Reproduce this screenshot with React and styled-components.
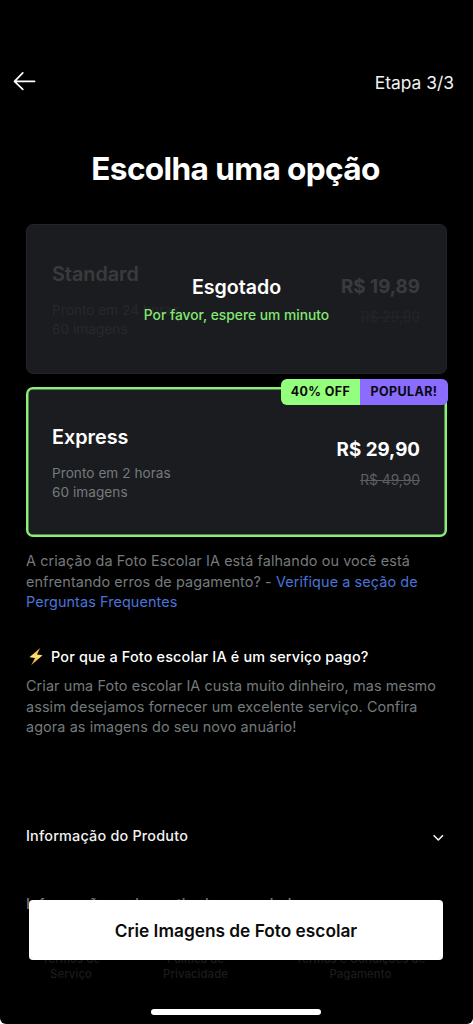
import React from 'react';
import styled, {createGlobalStyle} from 'styled-components';

const GlobalStyle = createGlobalStyle`
  * {
    box-sizing: border-box;
  }

  body {
    margin: 0;
    background: #fff;
    font-family: Inter, "Noto Sans", sans-serif;
    -webkit-font-smoothing: antialiased;
  }

  h1, h2, h3, p {
    margin: 0;
  }
`;

const Screen = styled.div`
  position: relative;
  height: 1024px;
  overflow: hidden;
  background: #000;
  border-radius: 0 0 6px 6px;
  color: #fff;
`;

const Header = styled.header`
  display: flex;
  align-items: center;
  justify-content: space-between;
  height: 165px;
  padding: 0 19px 0 13px;
`;

const BackButton = styled.button`
  display: flex;
  padding: 0;
  margin-top: -3px;
  border: 0;
  background: none;
  color: #fff;
`;

const Step = styled.span`
  font-size: 17.4px;
  color: #f2f2f2;
`;

const Title = styled.h1`
  margin-top: -17px;
  padding-right: 2px;
  text-align: center;
  font-size: 31.6px;
  line-height: 42px;
  font-weight: 700;
  letter-spacing: -0.63px;
`;

const Content = styled.main`
  padding: 0 26px;
`;

const Plans = styled.section`
  display: flex;
  flex-direction: column;
  gap: 13px;
  margin: 34px 0 14px;
`;

const Card = styled.article`
  position: relative;
  display: flex;
  justify-content: space-between;
  height: 150px;
  padding: ${({$active}) => ($active ? '35px 25px 0 24px' : '36px 26px 0 25px')};
  border: ${({$active}) => ($active ? '2px solid #8cf078' : '1px solid #232428')};
  border-radius: 7px;
  background: #1b1c1f;
  box-shadow: ${({$active}) => ($active ? 'inset 0 0 0 0.5px #8cf078' : 'none')};
`;

const PlanInfo = styled.div`
  opacity: ${({$faded}) => ($faded ? 0.13 : 1)};
`;

const PlanName = styled.h2`
  margin-bottom: 14px;
  font-size: 19.8px;
  line-height: 26px;
  font-weight: 600;
`;

const PlanDetail = styled.p`
  font-size: 13.6px;
  line-height: 19.2px;
  letter-spacing: 0.05px;
  color: #747b7e;
`;

const PlanPrice = styled.div`
  padding-top: 13px;
  text-align: right;
  opacity: ${({$faded}) => ($faded ? 0.13 : 1)};
`;

const Price = styled.p`
  font-size: 18.8px;
  line-height: 26px;
  font-weight: 700;
`;

const OldPrice = styled.p`
  margin-top: 7px;
  font-size: 13.8px;
  line-height: 20px;
  color: #5b5e61;
  text-decoration: line-through;
`;

const SoldOut = styled.div`
  position: absolute;
  inset: 2px 0 0;
  display: flex;
  flex-direction: column;
  align-items: center;
  justify-content: center;
  gap: 4px;
`;

const SoldOutTitle = styled.p`
  font-size: 19.6px;
  line-height: 26px;
  font-weight: 600;
`;

const SoldOutText = styled.p`
  font-size: 13.8px;
  line-height: 22px;
  font-weight: 500;
  color: #82e872;
`;

const Badges = styled.div`
  position: absolute;
  top: -10px;
  right: -3px;
  display: flex;
  overflow: hidden;
  height: 26px;
  border-radius: 6px;
`;

const Badge = styled.span`
  width: ${({$width}) => $width};
  background: ${({$color}) => $color};
  color: #08090c;
  font-size: 12.5px;
  line-height: 26px;
  font-weight: 700;
  letter-spacing: 0.4px;
  text-align: center;
  white-space: nowrap;
`;

const Text = styled.p`
  font-size: 14.4px;
  line-height: 20.5px;
  letter-spacing: 0.1px;
  white-space: nowrap;
  color: #747a7c;
`;

const Link = styled.a`
  color: #4c73d9;
`;

const Question = styled.h3`
  display: flex;
  align-items: center;
  gap: 6px;
  margin: 33px 0 8.5px;
  font-size: 14.4px;
  line-height: 22px;
  font-weight: 500;
  letter-spacing: 0.17px;

  svg {
    margin-left: 1px;
  }
`;

const AccordionRow = styled.div`
  display: flex;
  align-items: center;
  justify-content: space-between;
  margin-top: ${({$top}) => $top};
  font-size: 14.4px;
  line-height: 20px;
  font-weight: 500;
  letter-spacing: 0.2px;
  white-space: nowrap;
  color: ${({$muted}) => ($muted ? '#77797b' : '#f2f2f2')};

  svg {
    margin: 5px 3px 0 0;
  }
`;

const BottomBar = styled.div`
  position: absolute;
  left: 0;
  right: 0;
  bottom: 0;
  height: 124px;
  padding: 0 29px;
`;

const CreateButton = styled.button`
  position: relative;
  display: block;
  width: 414px;
  height: 60px;
  padding: 1px 0 0;
  border: 0;
  border-radius: 4px;
  background: #fff;
  color: #0b0b0b;
  font-family: inherit;
  font-size: 17.3px;
  font-weight: 600;
`;

const Footer = styled.footer`
  display: grid;
  grid-template-columns: 84px 165px 165px;
  margin-top: -8px;
  font-size: 11.3px;
  line-height: 14.5px;
  font-weight: 500;
  letter-spacing: 0.1px;
  text-align: center;
  color: #1c1c1c;
`;

const HomeIndicator = styled.div`
  width: 170px;
  height: 6px;
  margin: 28px 0 0 122px;
  border-radius: 3px;
  background: #fff;
`;

const ArrowLeft = () => (
    <svg width="23" height="20" viewBox="0 0 23 20" fill="none" stroke="currentColor" strokeWidth="1.7" strokeLinecap="round" strokeLinejoin="round">
        <path d="M21.6 10.3H1.5M9.8 1.9L1.5 10.3L9.8 18.4"/>
    </svg>
);

const ChevronDown = () => (
    <svg width="11" height="8" viewBox="0 0 11 8" fill="none" stroke="currentColor" strokeWidth="1.6" strokeLinecap="round" strokeLinejoin="round">
        <path d="M1.1 1.7L5.3 6L9.5 1.7"/>
    </svg>
);

const Bolt = () => (
    <svg width="18" height="20" viewBox="0 0 18 20">
        <defs>
            <linearGradient id="bolt" x1="0" y1="0" x2="0" y2="1">
                <stop offset="0" stopColor="#f0a52c"/>
                <stop offset="0.5" stopColor="#ffe27a"/>
                <stop offset="1" stopColor="#e08a1e"/>
            </linearGradient>
        </defs>
        <path d="M13.2 1L2.4 10.2L8 11L4.2 18.2L15.6 8.2L10 7.6Z" fill="url(#bolt)"/>
    </svg>
);

const plans = [
    {name: 'Standard', time: 'Pronto em 24 horas', price: 'R$ 19,89', oldPrice: 'R$ 29,90', soldOut: true},
    {name: 'Express', time: 'Pronto em 2 horas', price: 'R$ 29,90', oldPrice: 'R$ 49,90', soldOut: false},
];

const Plan = ({plan}) => (
    <Card $active={!plan.soldOut}>
        <PlanInfo $faded={plan.soldOut}>
            <PlanName>{plan.name}</PlanName>
            <PlanDetail>{plan.time}</PlanDetail>
            <PlanDetail>60 imagens</PlanDetail>
        </PlanInfo>
        <PlanPrice $faded={plan.soldOut}>
            <Price>{plan.price}</Price>
            <OldPrice>{plan.oldPrice}</OldPrice>
        </PlanPrice>
        {plan.soldOut ? (
            <SoldOut>
                <SoldOutTitle>Esgotado</SoldOutTitle>
                <SoldOutText>Por favor, espere um minuto</SoldOutText>
            </SoldOut>
        ) : (
            <Badges>
                <Badge $color="#94ff7c" $width="79px">40% OFF</Badge>
                <Badge $color="#8a6cff" $width="88px">POPULAR!</Badge>
            </Badges>
        )}
    </Card>
);

const App = () => {
    return (
        <>
            <GlobalStyle/>
            <Screen>
                <Header>
                    <BackButton aria-label="Voltar"><ArrowLeft/></BackButton>
                    <Step>Etapa 3/3</Step>
                </Header>
                <Title>Escolha uma opção</Title>

                <Content>
                    <Plans>
                        {plans.map((plan) => <Plan key={plan.name} plan={plan}/>)}
                    </Plans>

                    <Text>
                        A criação da Foto Escolar IA está falhando ou você está<br/>
                        enfrentando erros de pagamento? - <Link>Verifique a seção de<br/>
                        Perguntas Frequentes</Link>
                    </Text>

                    <Question><Bolt/>Por que a Foto escolar IA é um serviço pago?</Question>
                    <Text>
                        Criar uma Foto escolar IA custa muito dinheiro, mas mesmo<br/>
                        assim desejamos fornecer um excelente serviço. Confira<br/>
                        agora as imagens do seu novo anuário!
                    </Text>

                    <AccordionRow $top="88px">Informação do Produto<ChevronDown/></AccordionRow>
                    <AccordionRow $top="48px" $muted>Informações sobre retirada e reembolso</AccordionRow>
                </Content>

                <BottomBar>
                    <CreateButton>Crie Imagens de Foto escolar</CreateButton>
                    <Footer>
                        <span>Termos de<br/>Serviço</span>
                        <span>Política de<br/>Privacidade</span>
                        <span>Termos e Condições de<br/>Pagamento</span>
                    </Footer>
                    <HomeIndicator/>
                </BottomBar>
            </Screen>
        </>
    );
};

export default App;
